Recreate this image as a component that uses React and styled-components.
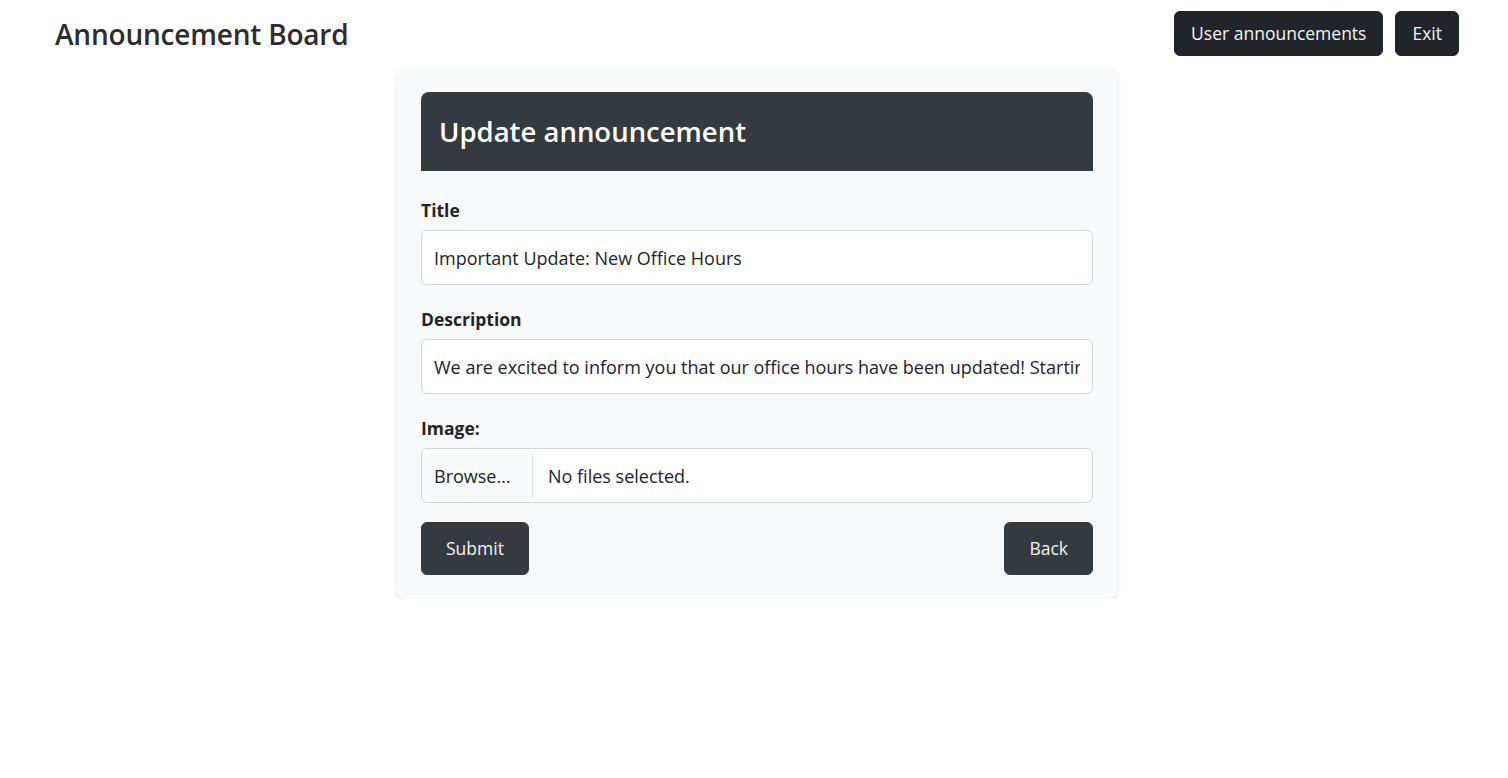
import React from 'react';
import styled, { createGlobalStyle } from 'styled-components';

const GlobalStyle = createGlobalStyle`
  body {
    margin: 0;
    background: #fff;
    color: #212529;
    font-family: "Open Sans", "Noto Sans", sans-serif;
  }
  * { box-sizing: border-box; }
`;

const NavBar = styled.nav`
  display: flex;
  align-items: center;
  justify-content: space-between;
  padding: 11px 49px 0 55px;
`;

const Brand = styled.a`
  font-size: 28px;
  font-weight: 600;
  color: #2b2d30;
  text-decoration: none;
  letter-spacing: -0.2px;
`;

const NavActions = styled.div`
  display: flex;
  gap: 12px;
`;

const DarkButton = styled.button`
  font-family: inherit;
  font-size: 17.5px;
  line-height: 27px;
  padding: ${p => (p.$large ? '12px 24px' : '8px 16px')};
  color: #f1f3f5;
  background: ${p => (p.$tone === 'slate' ? '#343a40' : '#212529')};
  border: 1px solid ${p => (p.$tone === 'slate' ? '#343a40' : '#212529')};
  border-radius: 6px;
  cursor: pointer;
`;

const Main = styled.main`
  display: flex;
  justify-content: center;
  padding: 13px 0 0 6px;
`;

const Card = styled.div`
  width: 720px;
  background: #f8f9fa;
  border-radius: 8px;
  padding: 23px 24px 24px;
  box-shadow: 0 2px 5px rgba(0, 0, 0, 0.13);
`;

const CardHeader = styled.div`
  background: #343a40;
  border-radius: 8px 8px 0 0;
  height: 79px;
  display: flex;
  align-items: center;
  padding: 0 18px;
  margin-bottom: 28px;
`;

const Heading = styled.h2`
  margin: 0;
  color: #fff;
  font-size: 27.5px;
  font-weight: 600;
`;

const Field = styled.div`
  margin-bottom: ${p => (p.$last ? '19px' : '23px')};
`;

const Label = styled.label`
  display: block;
  font-size: 17.5px;
  font-weight: 700;
  line-height: 23px;
  margin-bottom: 8px;
`;

const Input = styled.input`
  display: block;
  width: 100%;
  height: 55px;
  padding: 0 12px;
  font-family: inherit;
  font-size: 18px;
  color: #212529;
  background: #fff;
  border: 1px solid #ced4da;
  border-radius: 6px;
  outline: none;
`;

const FileBox = styled.div`
  display: flex;
  align-items: center;
  height: 55px;
  background: #fff;
  border: 1px solid #ced4da;
  border-radius: 6px;
  font-size: 18px;
`;

const BrowseButton = styled.span`
  display: flex;
  align-items: center;
  align-self: stretch;
  min-width: 111px;
  margin: 5px 0;
  padding: 0 12px;
  background: #f8f9fa;
  border-right: 1px solid #dee2e6;
  color: #212529;
`;

const FileName = styled.span`
  padding-left: 15px;
`;

const Actions = styled.div`
  display: flex;
  justify-content: space-between;
`;

export default function App() {
  return (
    <>
      <GlobalStyle />
      <NavBar>
        <Brand href="#">Announcement Board</Brand>
        <NavActions>
          <DarkButton>User announcements</DarkButton>
          <DarkButton>Exit</DarkButton>
        </NavActions>
      </NavBar>
      <Main>
        <Card>
          <CardHeader>
            <Heading>Update announcement</Heading>
          </CardHeader>
          <form onSubmit={e => e.preventDefault()}>
            <Field>
              <Label htmlFor="title">Title</Label>
              <Input id="title" defaultValue="Important Update: New Office Hours" />
            </Field>
            <Field>
              <Label htmlFor="description">Description</Label>
              <Input
                id="description"
                defaultValue="We are excited to inform you that our office hours have been updated! Starting next week, our office will be open from 8 AM to 6 PM."
              />
            </Field>
            <Field $last>
              <Label>Image:</Label>
              <FileBox>
                <BrowseButton>Browse…</BrowseButton>
                <FileName>No files selected.</FileName>
              </FileBox>
            </Field>
            <Actions>
              <DarkButton $large $tone="slate" type="submit">Submit</DarkButton>
              <DarkButton $large $tone="slate" type="button">Back</DarkButton>
            </Actions>
          </form>
        </Card>
      </Main>
    </>
  );
}
